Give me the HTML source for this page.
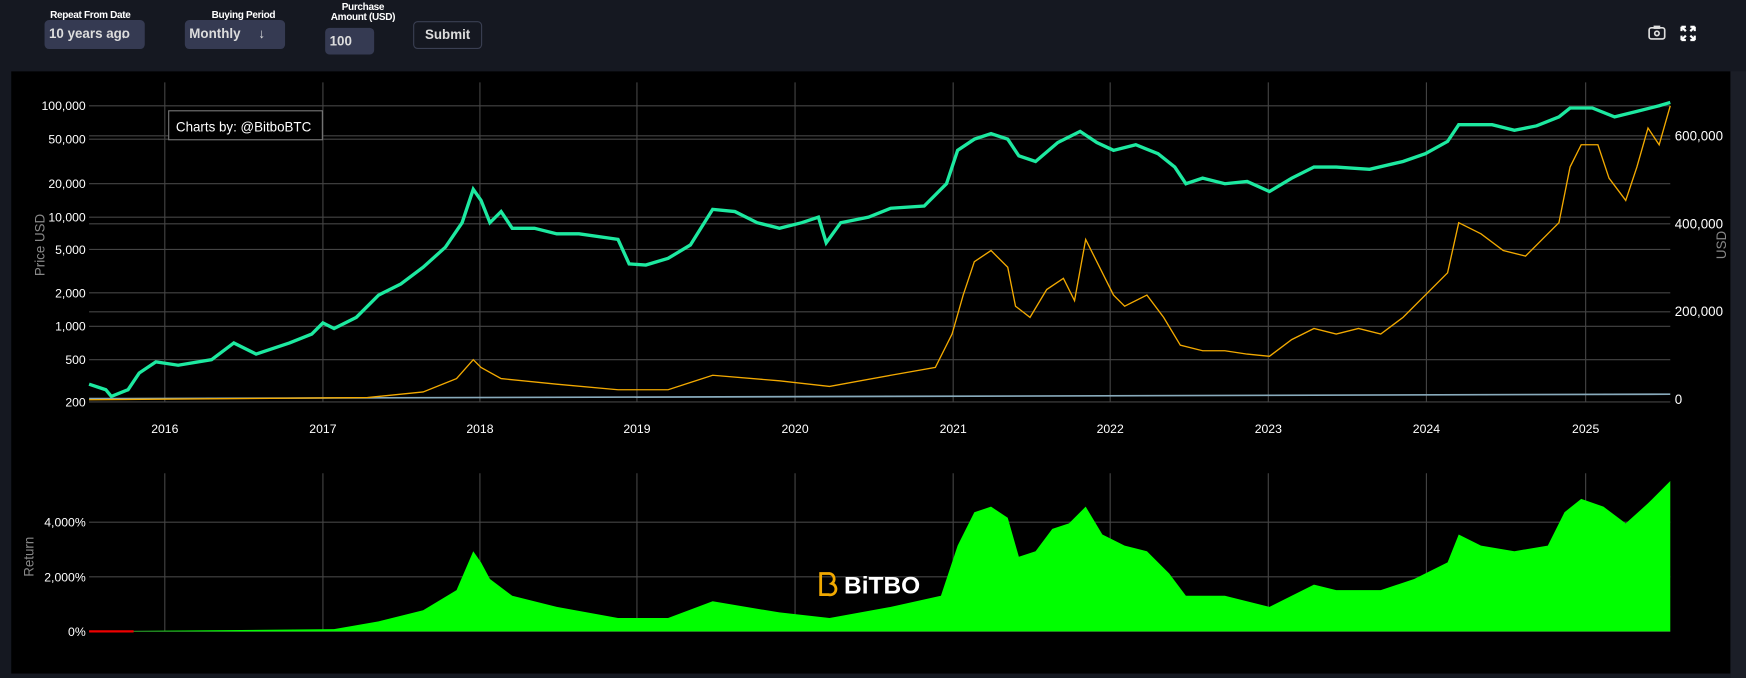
<!DOCTYPE html>
<html><head><meta charset="utf-8"><style>
body{margin:0;background:#151821;width:1746px;height:675px;overflow:hidden;font-family:"Liberation Sans",sans-serif;position:relative}
#w{position:absolute;left:0;top:0;width:1568px;height:606px;transform:scale(1.11352);transform-origin:0 0}
.lbl{position:absolute;color:#fff;font-size:9px;font-weight:bold;letter-spacing:-0.3px}
.sel{position:absolute;background:#353a52;border-radius:4px;color:#ddd;font-size:12px;font-weight:bold;padding:0 4px;box-sizing:border-box;line-height:25px}
</style></head><body><div id="w">
<div class="lbl" style="left:45px;top:8px">Repeat From Date</div>
<div class="sel" style="left:40px;top:18px;width:90px;height:26px">10 years ago<span style="position:absolute;left:68px">↓</span></div>
<div class="lbl" style="left:190px;top:8px">Buying Period</div>
<div class="sel" style="left:166px;top:18px;width:90px;height:26px">Monthly<span style="position:absolute;left:66px">↓</span></div>
<div class="lbl" style="left:297px;top:2px;line-height:9px;text-align:center">Purchase<br>Amount (USD)</div>
<div class="sel" style="left:292px;top:25px;width:44px;height:24px;line-height:24px">100</div>
<div style="position:absolute;left:371px;top:19px;width:62px;height:25px;border:1px solid #3a3f52;border-radius:4px;box-sizing:border-box;color:#ddd;font-size:12px;font-weight:bold;text-align:center;line-height:23px">Submit</div>
<svg style="position:absolute;left:1480px;top:22px" width="16" height="14"><rect x="1" y="3" width="14" height="10" rx="2" fill="none" stroke="#ddd" stroke-width="1.5"/><rect x="5" y="1" width="6" height="3" fill="#ddd"/><circle cx="8" cy="8" r="2" fill="none" stroke="#ddd" stroke-width="1.5"/></svg>
<svg style="position:absolute;left:1509px;top:23px" width="14" height="14" stroke="#fff" stroke-width="2" fill="none"><path d="M1 1l4 4M1 1h4M1 1v4M13 1l-4 4M13 1h-4M13 1v4M1 13l4-4M1 13h4M1 13v-4M13 13l-4-4M13 13h-4M13 13v-4"/></svg>
<div style="position:absolute;left:1554px;top:64px;width:16px;height:545px;background:#1b1e27"></div>
<svg style="position:absolute;left:10px;top:64px" width="1544" height="541" viewBox="10 64 1544 541">
<rect x="10" y="64" width="1544" height="541" fill="#000"/>
<g stroke="#444" stroke-width="1">
<path d="M148 74V361M290 74V361M431 74V361M572 74V361M714 74V361M856 74V361M997 74V361M1139 74V361M1281 74V361M1424 74V361"/>
<path d="M80 95H1500M80 125H1500M80 165H1500M80 195H1500M80 224H1500M80 263H1500M80 293H1500M80 323H1500M80 361H1500M80 122H1500M80 201H1500M80 280H1500"/>
<path d="M148 425V567M290 425V567M431 425V567M572 425V567M714 425V567M856 425V567M997 425V567M1139 425V567M1281 425V567M1424 425V567M80 469H1500M80 518H1500M80 567H1500"/>
</g>
<path d="M80 567L300 565L340 558L380 548L410 530L425 495L432 505L440 520L460 535L500 545L555 555L600 555L640 540L700 550L745 555L800 545L845 535L860 490L875 460L890 455L905 465L915 500L930 495L945 475L960 470L975 455L990 480L1010 490L1030 495L1050 515L1065 535L1100 535L1140 545L1160 535L1180 525L1200 530L1240 530L1270 520L1300 505L1310 480L1330 490L1360 495L1390 490L1405 460L1420 448L1440 455L1460 470L1480 452L1500 432L1500 567Z" fill="#00ff00"/>
<path d="M80 567H120" stroke="#e00" stroke-width="2"/>
<path d="M80 358L1500 354" stroke="#8ab" stroke-width="1.5"/>
<polyline fill="none" stroke="#f2a900" stroke-width="1.2" points="80,359 330,357 380,352 410,340 425,323 432,330 450,340 500,345 555,350 600,350 640,337 700,342 745,347 800,337 840,330 855,300 865,265 875,235 890,225 905,240 912,275 925,285 940,260 955,250 965,270 975,215 990,245 1000,265 1010,275 1030,265 1045,285 1060,310 1080,315 1100,315 1120,318 1140,320 1160,305 1180,295 1200,300 1220,295 1240,300 1260,285 1280,265 1300,245 1310,200 1330,210 1350,225 1370,230 1390,210 1400,200 1410,150 1420,130 1435,130 1445,160 1460,180 1470,150 1480,115 1490,130 1500,95"/>
<polyline fill="none" stroke="#1de9a0" stroke-width="3" points="80,345 95,350 100,356 115,350 125,335 140,325 160,328 190,323 210,308 230,318 260,308 280,300 290,290 300,295 320,285 340,265 360,255 380,240 400,222 415,200 425,170 432,180 440,200 450,190 460,205 480,205 500,210 520,210 555,215 565,237 580,238 600,232 620,220 640,188 660,190 680,200 700,205 720,200 735,195 742,218 755,200 780,195 800,187 830,185 850,165 860,135 875,125 890,120 905,125 915,140 930,145 950,128 970,118 985,128 1000,135 1020,130 1040,138 1055,150 1065,165 1080,160 1100,165 1120,163 1140,172 1160,160 1180,150 1200,150 1230,152 1260,145 1280,138 1300,127 1310,112 1340,112 1360,117 1380,113 1400,105 1410,97 1430,97 1450,105 1470,100 1490,95 1500,92"/>
<rect x="151.5" y="99.5" width="138" height="26" fill="#000" stroke="#777"/>
<text x="158" y="118" fill="#fff" font-size="12">Charts by: @BitboBTC</text>
<g fill="#fff" font-size="11" text-anchor="end">
<text x="77" y="99">100,000</text><text x="77" y="129">50,000</text><text x="77" y="169">20,000</text><text x="77" y="199">10,000</text><text x="77" y="228">5,000</text><text x="77" y="267">2,000</text><text x="77" y="297">1,000</text><text x="77" y="327">500</text><text x="77" y="365">200</text>
<text x="77" y="473">4,000%</text><text x="77" y="522">2,000%</text><text x="77" y="571">0%</text>
</g>
<g fill="#fff" font-size="12">
<text x="1504" y="126">600,000</text><text x="1504" y="205">400,000</text><text x="1504" y="284">200,000</text><text x="1504" y="363">0</text>
</g>
<g fill="#fff" font-size="11" text-anchor="middle">
<text x="148" y="389">2016</text><text x="290" y="389">2017</text><text x="431" y="389">2018</text><text x="572" y="389">2019</text><text x="714" y="389">2020</text><text x="856" y="389">2021</text><text x="997" y="389">2022</text><text x="1139" y="389">2023</text><text x="1281" y="389">2024</text><text x="1424" y="389">2025</text>
</g>
<g fill="#888" font-size="12" text-anchor="middle">
<text transform="translate(40,220) rotate(-90)">Price USD</text>
<text transform="translate(1550,220) rotate(-90)">USD</text>
<text transform="translate(30,500) rotate(-90)">Return</text>
</g>
<path d="M737 515h8a5 5 0 0 1 2 9a5 5 0 0 1-3 10h-7z" fill="none" stroke="#f2a900" stroke-width="2.5"/>
<text x="758" y="533" fill="#fff" font-size="22" font-weight="bold">BiTBO</text>
</svg>
</div></body></html>
